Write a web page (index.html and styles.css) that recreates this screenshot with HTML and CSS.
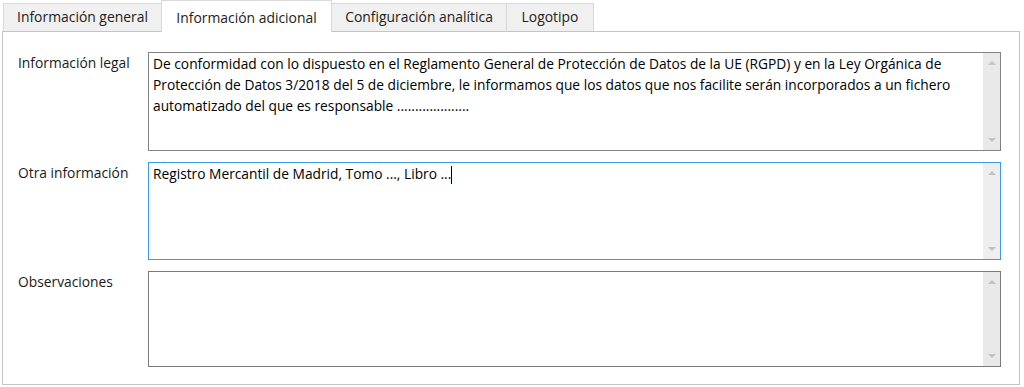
FILE: index.html
```html
<!DOCTYPE html>
<html lang="es">
<head>
<meta charset="utf-8">
<title>Información adicional</title>
<link rel="stylesheet" href="styles.css">
</head>
<body>
<div class="tabs">
  <div class="tab tab-general">Información general</div>
  <div class="tab tab-adicional active">Información adicional</div>
  <div class="tab tab-analitica">Configuración analítica</div>
  <div class="tab tab-logo">Logotipo</div>
</div>
<div class="panel">
  <div class="row">
    <div class="label">Información legal</div>
    <div class="box box-legal">
      <div class="content">
        <div class="line">De conformidad con lo dispuesto en el Reglamento General de Protección de Datos de la UE (RGPD) y en la Ley Orgánica de</div>
        <div class="line">Protección de Datos 3/2018 del 5 de diciembre, le informamos que los datos que nos facilite serán incorporados a un fichero</div>
        <div class="line">automatizado del que es responsable ....................</div>
      </div>
      <div class="scroll"><span class="arrow up"></span><span class="arrow down"></span></div>
    </div>
  </div>
  <div class="row">
    <div class="label">Otra información</div>
    <div class="box box-otra focused">
      <div class="content">
        <div class="line">Registro Mercantil de Madrid, Tomo ..., Libro ...<span class="caret"></span></div>
      </div>
      <div class="scroll light"><span class="arrow up"></span><span class="arrow down"></span></div>
    </div>
  </div>
  <div class="row">
    <div class="label">Observaciones</div>
    <div class="box box-obs">
      <div class="content"></div>
      <div class="scroll"><span class="arrow up"></span><span class="arrow down"></span></div>
    </div>
  </div>
</div>
</body>
</html>
```
FILE: styles.css
```css
html, body {
  margin: 0;
  padding: 0;
  background: #ffffff;
}
body {
  width: 1024px;
  height: 387px;
  overflow: hidden;
  font-family: "Open Sans", "Noto Sans", "Liberation Sans", sans-serif;
  font-size: 13.75px;
  color: #1a1a1a;
}
.tabs {
  display: flex;
  align-items: flex-start;
  padding-left: 3px;
  height: 32px;
  margin-bottom: -1px;
  position: relative;
  z-index: 2;
  font-size: 13.9px;
}
.tab {
  box-sizing: border-box;
  margin-top: 3px;
  height: 28px;
  background: #f0f0f0;
  border: 1px solid #d9d9d9;
  border-bottom: none;
  text-align: center;
  line-height: 26px;
  color: #222;
}
.tab + .tab { border-left: none; }
.tab-general { width: 159px; }
.tab-adicional { width: 171px; }
.tab-analitica { width: 175px; }
.tab-logo { width: 87px; }
.tab.active {
  margin-top: 0;
  height: 32px;
  background: #ffffff;
  border-left: 1px solid #d9d9d9;
  margin-left: -1px;
  line-height: 34px;
}
.panel {
  box-sizing: border-box;
  margin-left: 2px;
  width: 1018px;
  height: 354px;
  border: 1px solid #c4c4c4;
  padding: 20px 0 0 15px;
  display: flex;
  flex-direction: column;
  gap: 11px;
}
.row {
  display: flex;
  align-items: flex-start;
}
.label {
  width: 130px;
  line-height: 21px;
  font-size: 13.8px;
  color: #1a1a1a;
}
.box {
  box-sizing: border-box;
  width: 853px;
  border: 1px solid #7a7a7a;
  display: flex;
  background: #fff;
}
.box-legal { height: 99px; border-color: #828282; }
.box-otra { height: 98px; }
.box-obs { height: 96px; }
.box.focused { border-color: #3d9ae8; }
.content {
  flex: 1;
  padding: 0 0 0 4px;
  line-height: 21px;
  color: #000;
  white-space: nowrap;
  overflow: hidden;
}
.caret {
  display: inline-block;
  width: 0;
  height: 18px;
  border-left: 1px solid #000;
  vertical-align: -5px;
}
.scroll {
  width: 17px;
  background: #e9e9e9;
  display: flex;
  flex-direction: column;
  justify-content: space-between;
  align-items: center;
  padding: 8px 0 8px;
  box-sizing: border-box;
}
.scroll.light { background: #eeeeee; }
.arrow {
  width: 0;
  height: 0;
  border-left: 4px solid transparent;
  border-right: 4px solid transparent;
}
.arrow.up { border-bottom: 4px solid #c2c2c2; }
.arrow.down { border-top: 4px solid #c2c2c2; }
```
